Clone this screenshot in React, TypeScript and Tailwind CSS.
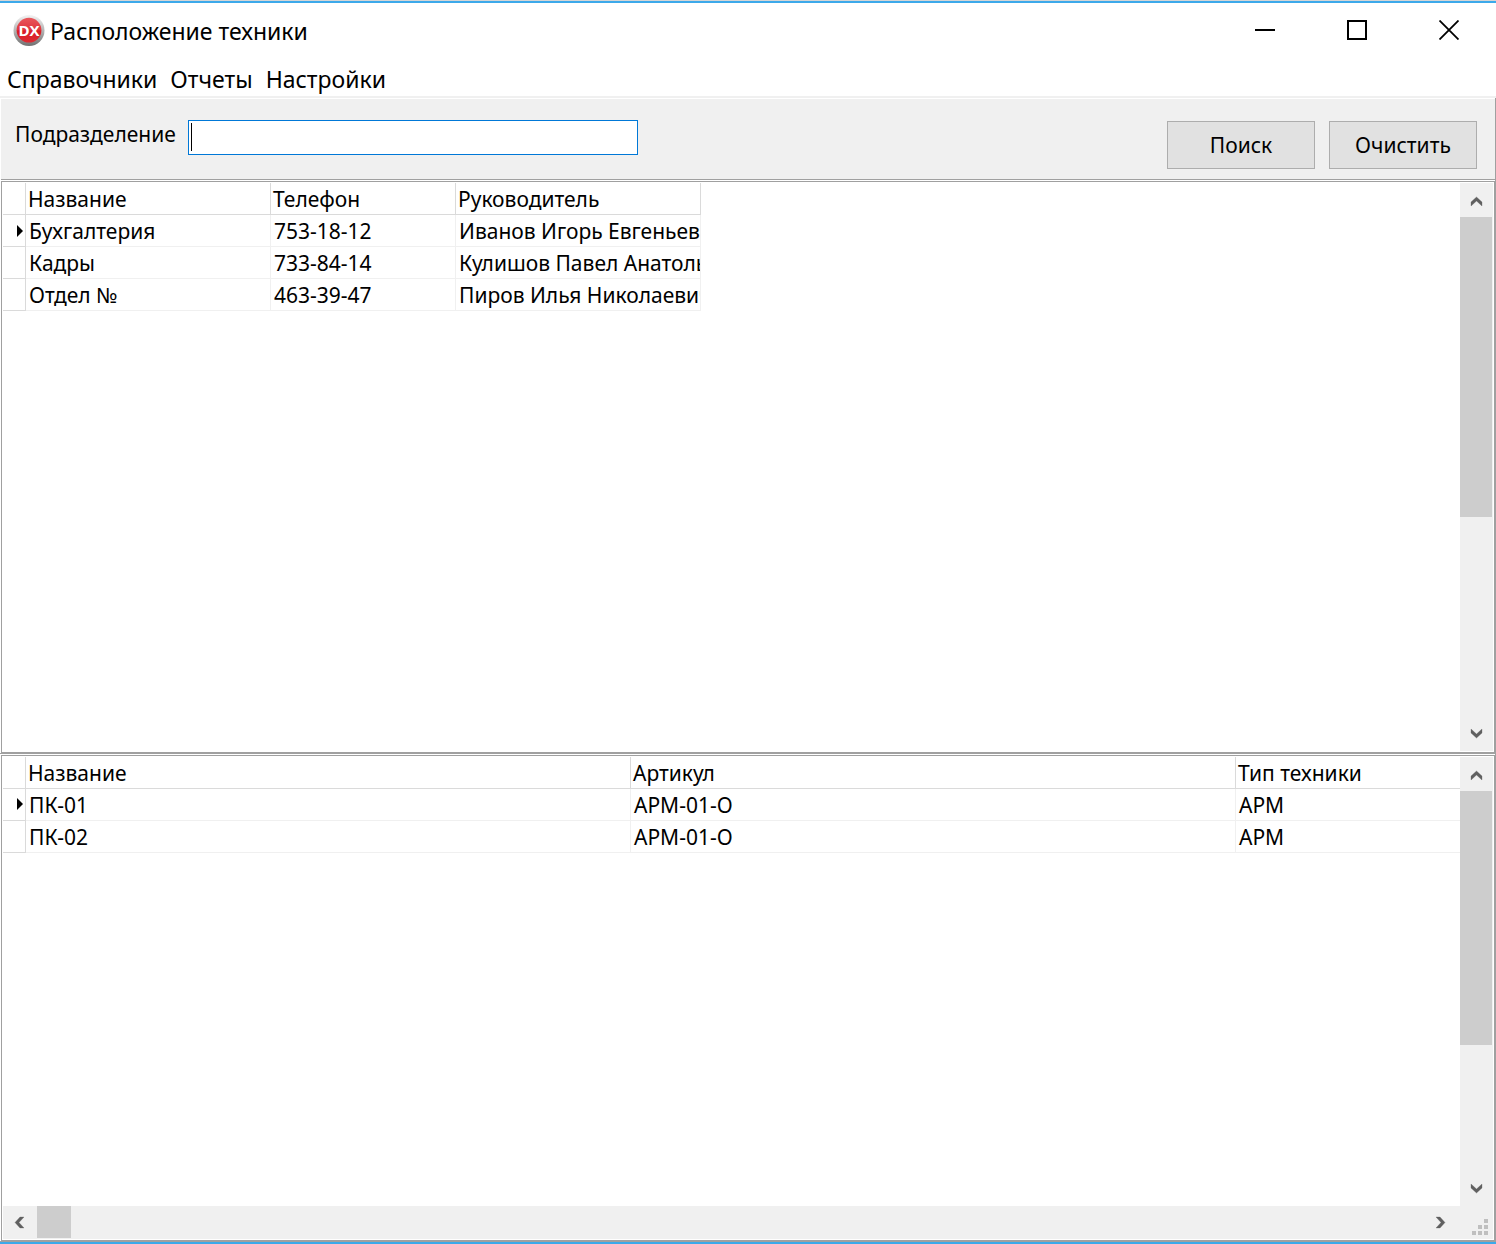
import React from "react";

type Direction = "up" | "down" | "left" | "right";

const arrowPoints: Record<Direction, string> = {
  up: "0,5 5.5,0 11,5 11,9 5.5,4 0,9",
  down: "0,0 5.5,5 11,0 11,4 5.5,9 0,4",
  left: "5,0 0,5.5 5,11 9,11 4,5.5 9,0",
  right: "4,0 9,5.5 4,11 0,11 5,5.5 0,0",
};

const arrowButtonSize: Record<Direction, string> = {
  up: "h-[34px] w-[33px] pt-[3px]",
  down: "h-[34px] w-[33px] pb-px",
  left: "h-[33px] w-[33px]",
  right: "h-[33px] w-[33px]",
};

function ScrollArrow({ direction, label }: { direction: Direction; label: string }) {
  const vertical = direction === "up" || direction === "down";
  return (
    <button
      type="button"
      aria-label={label}
      className={`flex shrink-0 items-center justify-center bg-[#f0f0f0] ${arrowButtonSize[direction]}`}
    >
      <svg
        width={vertical ? 11 : 9}
        height={vertical ? 9 : 11}
        viewBox={vertical ? "0 0 11 9" : "0 0 9 11"}
        className="overflow-visible"
        aria-hidden="true"
      >
        <polygon points={arrowPoints[direction]} fill="#606060" stroke="#606060" strokeWidth="0.3" />
      </svg>
    </button>
  );
}

function VerticalScrollbar({ thumb }: { thumb: string }) {
  return (
    <div className="flex w-[33px] shrink-0 flex-col bg-[#f0f0f0]">
      <ScrollArrow direction="up" label="Прокрутить вверх" />
      <div className="min-h-0 grow">
        <div className={`w-8 bg-[#cdcdcd] ${thumb}`} />
      </div>
      <ScrollArrow direction="down" label="Прокрутить вниз" />
    </div>
  );
}

interface GridTableProps {
  label: string;
  widths: number[];
  headers: string[];
  rows: string[][];
}

function GridTable({ label, widths, headers, rows }: GridTableProps) {
  const total = widths.reduce((sum, w) => sum + w, 23);
  return (
    <div className="min-w-0 grow overflow-hidden">
      <table
        aria-label={label}
        className="table-fixed border-separate border-spacing-0 text-left leading-[29px]"
        style={{ width: total }}
      >
        <colgroup>
          <col style={{ width: 23 }} />
          {widths.map((w, i) => (
            <col key={i} style={{ width: w }} />
          ))}
        </colgroup>
        <thead>
          <tr className="h-8">
            <th className="border-r border-b border-[#dadada] p-0" aria-label="Текущая запись" />
            {headers.map((h) => (
              <th
                key={h}
                scope="col"
                className="overflow-hidden border-r border-b border-[#dadada] p-0 pt-0.5 pl-0.5 font-normal whitespace-nowrap"
              >
                {h}
              </th>
            ))}
          </tr>
        </thead>
        <tbody>
          {rows.map((row, r) => (
            <tr key={row[0]} className="h-8">
              <td className="border-r border-b border-[#dadada] p-0">
                {r === 0 && (
                  <svg className="ml-auto mr-0.5" width="6" height="12" viewBox="0 0 6 12" aria-hidden="true">
                    <path d="M0 0L6 6L0 12Z" fill="#000" />
                  </svg>
                )}
              </td>
              {row.map((cell, c) => (
                <td
                  key={c}
                  className="overflow-hidden border-r border-b border-[#f0f0f0] p-0 pt-0.5 pl-[3px] whitespace-nowrap"
                >
                  {cell}
                </td>
              ))}
            </tr>
          ))}
        </tbody>
      </table>
    </div>
  );
}

function AppLogo() {
  return (
    <svg width="32" height="32" viewBox="0 0 32 32" aria-hidden="true">
      <defs>
        <linearGradient id="rim" x1="0" y1="0" x2="0" y2="1">
          <stop offset="0" stopColor="#f4f4f4" />
          <stop offset="0.5" stopColor="#b4b4b4" />
          <stop offset="1" stopColor="#707070" />
        </linearGradient>
        <linearGradient id="disc" x1="0" y1="0" x2="0" y2="1">
          <stop offset="0" stopColor="#e8575b" />
          <stop offset="0.5" stopColor="#e0353c" />
          <stop offset="0.52" stopColor="#d81c26" />
          <stop offset="1" stopColor="#de2a32" />
        </linearGradient>
      </defs>
      <circle cx="16" cy="15.5" r="15.5" fill="url(#rim)" />
      <circle cx="16" cy="15.2" r="12.4" fill="url(#disc)" />
      <text
        x="16"
        y="20.5"
        textAnchor="middle"
        fontSize="15"
        fontWeight="700"
        fill="#fff"
        fontFamily="Open Sans, sans-serif"
      >
        DX
      </text>
    </svg>
  );
}

function SizeGrip() {
  return (
    <svg width="16" height="16" viewBox="0 0 16 16" fill="#bfbfbf" aria-hidden="true">
      <path d="M12 0h4v4h-4zM6 6h4v4H6zM12 6h4v4h-4zM0 12h4v4H0zM6 12h4v4H6zM12 12h4v4h-4z" />
    </svg>
  );
}

const buttonClass =
  "h-12 w-[148px] border border-[#adadad] bg-[#e1e1e1] leading-7 text-black";

export default function App() {
  return (
    <div className="flex h-screen flex-col border-b-2 border-[#3ca9ea] bg-white font-['Noto_Sans',sans-serif] text-black">
      <div className="h-px shrink-0 bg-[#d6d6d6]" />
      <div className="h-0.5 shrink-0 bg-[#3ca9ea]" />

      <header className="flex h-[59px] shrink-0 items-start justify-between pr-px pl-[13px]">
        <div className="flex items-center gap-[5px] pt-3">
          <AppLogo />
          <h1 className="text-[23px] leading-8">Расположение техники</h1>
        </div>
        <div className="flex">
          <button type="button" aria-label="Свернуть" className="flex h-[54px] w-[92px] items-center justify-center">
            <svg width="20" height="20" viewBox="0 0 20 20" aria-hidden="true">
              <path d="M0 10H20" stroke="#000" strokeWidth="2" />
            </svg>
          </button>
          <button type="button" aria-label="Развернуть" className="flex h-[54px] w-[92px] items-center justify-center">
            <svg width="20" height="20" viewBox="0 0 20 20" fill="none" aria-hidden="true">
              <rect x="1" y="1" width="18" height="18" stroke="#000" strokeWidth="2" />
            </svg>
          </button>
          <button type="button" aria-label="Закрыть" className="flex h-[54px] w-[92px] items-center justify-center">
            <svg width="20" height="20" viewBox="0 0 20 20" aria-hidden="true">
              <path d="M0.5 0.5L19.5 19.5M19.5 0.5L0.5 19.5" stroke="#000" strokeWidth="1.8" />
            </svg>
          </button>
        </div>
      </header>

      <nav
        aria-label="Меню"
        className="flex h-9 shrink-0 items-center gap-[13px] border-b-2 border-[#f0f0f0] pl-[7px] text-[23px] leading-8"
      >
        <button type="button">Справочники</button>
        <button type="button">Отчеты</button>
        <button type="button">Настройки</button>
      </nav>

      <main className="flex min-h-0 grow flex-col border-r border-b border-[#a0a0a0] text-[21px]">
        <form
          className="ml-px mt-px flex h-[81px] shrink-0 items-start justify-between border-b border-[#a0a0a0] bg-[#f0f0f0] pr-[18px] pl-[14px]"
          onSubmit={(e) => e.preventDefault()}
        >
          <div className="flex items-start pt-[21px]">
            <label htmlFor="department" className="w-[173px] leading-7">
              Подразделение
            </label>
            <div className="relative flex">
              <input
                id="department"
                type="text"
                className="h-[35px] w-[450px] border border-[#0078d7] bg-white px-1 outline-none"
              />
              <span className="absolute top-[3px] left-[3px] h-7 w-px bg-black" />
            </div>
          </div>
          <div className="flex gap-3.5 pt-[22px]">
            <button type="submit" className={buttonClass}>
              Поиск
            </button>
            <button type="reset" className={buttonClass}>
              Очистить
            </button>
          </div>
        </form>

        <section className="mt-px flex min-h-0 flex-[573_1_0px] pl-px">
          <div className="flex min-w-0 grow border border-[#a0a0a0] p-px">
            <GridTable
              label="Подразделения"
              widths={[245, 185, 245]}
              headers={["Название", "Телефон", "Руководитель"]}
              rows={[
                ["Бухгалтерия", "753-18-12", "Иванов Игорь Евгеньевич"],
                ["Кадры", "733-84-14", "Кулишов Павел Анатольевич"],
                ["Отдел №", "463-39-47", "Пиров Илья Николаевич"],
              ]}
            />
            <VerticalScrollbar thumb="h-[60%]" />
          </div>
        </section>

        <section className="flex min-h-0 flex-[487_1_0px] border-t border-[#a0a0a0] pt-px pl-px">
          <div className="flex min-w-0 grow flex-col border border-[#a0a0a0] p-px">
            <div className="flex min-h-0 grow">
              <GridTable
                label="Техника"
                widths={[605, 605, 605]}
                headers={["Название", "Артикул", "Тип техники"]}
                rows={[
                  ["ПК-01", "АРМ-01-О", "АРМ"],
                  ["ПК-02", "АРМ-01-О", "АРМ"],
                ]}
              />
              <VerticalScrollbar thumb="h-2/3" />
            </div>
            <div className="flex h-[33px] shrink-0 bg-[#f0f0f0]">
              <ScrollArrow direction="left" label="Прокрутить влево" />
              <div className="min-w-0 grow pl-px">
                <div className="h-8 w-[34px] bg-[#cdcdcd]" />
              </div>
              <ScrollArrow direction="right" label="Прокрутить вправо" />
              <div className="flex w-9 items-end justify-end pr-[5px] pb-1">
                <SizeGrip />
              </div>
            </div>
          </div>
        </section>
      </main>
    </div>
  );
}
